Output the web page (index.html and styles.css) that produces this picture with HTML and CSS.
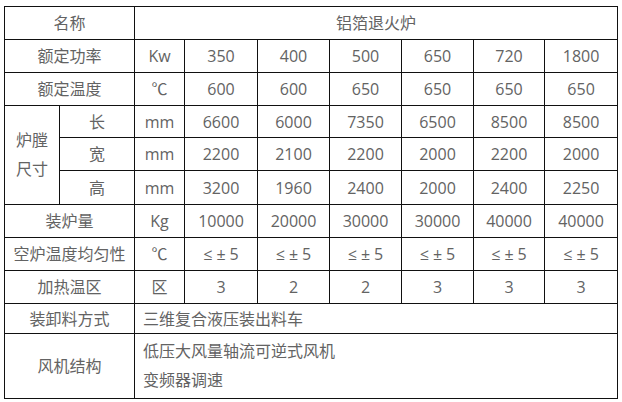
FILE: index.html
```html
<!DOCTYPE html>
<html lang="zh">
<head>
<meta charset="utf-8">
<link rel="stylesheet" href="styles.css">
</head>
<body>
<div class="wrap">
<table class="spec">
  <colgroup>
    <col class="c-a"><col class="c-b"><col class="c-u">
    <col class="c-1"><col class="c-2"><col class="c-3"><col class="c-4"><col class="c-5"><col class="c-6">
  </colgroup>
  <tr class="r33"><td colspan="2">名称</td><td colspan="7">铝箔退火炉</td></tr>
  <tr class="r33"><td colspan="2">额定功率</td><td>Kw</td><td>350</td><td>400</td><td>500</td><td>650</td><td>720</td><td>1800</td></tr>
  <tr class="r33"><td colspan="2">额定温度</td><td>℃</td><td>600</td><td>600</td><td>650</td><td>650</td><td>650</td><td>650</td></tr>
  <tr class="r32"><td rowspan="3" class="two">炉膛<br>尺寸</td><td>长</td><td>mm</td><td>6600</td><td>6000</td><td>7350</td><td>6500</td><td>8500</td><td>8500</td></tr>
  <tr class="r33"><td>宽</td><td>mm</td><td>2200</td><td>2100</td><td>2200</td><td>2000</td><td>2200</td><td>2000</td></tr>
  <tr class="r34"><td>高</td><td>mm</td><td>3200</td><td>1960</td><td>2400</td><td>2000</td><td>2400</td><td>2250</td></tr>
  <tr class="r33"><td colspan="2">装炉量</td><td>Kg</td><td>10000</td><td>20000</td><td>30000</td><td>30000</td><td>40000</td><td>40000</td></tr>
  <tr class="r33"><td colspan="2">空炉温度均匀性</td><td>℃</td><td class="tol">≤±5</td><td class="tol">≤±5</td><td class="tol">≤±5</td><td class="tol">≤±5</td><td class="tol">≤±5</td><td class="tol">≤±5</td></tr>
  <tr class="r33"><td colspan="2">加热温区</td><td>区</td><td>3</td><td>2</td><td>2</td><td>3</td><td>3</td><td>3</td></tr>
  <tr class="r30"><td colspan="2">装卸料方式</td><td colspan="7" class="left">三维复合液压装出料车</td></tr>
  <tr class="r65"><td colspan="2">风机结构</td><td colspan="7" class="left two">低压大风量轴流可逆式风机<br>变频器调速</td></tr>
</table>
</div>
</body>
</html>
```
FILE: styles.css
```css
html, body {
  margin: 0;
  padding: 0;
  background: #ffffff;
}
.wrap {
  padding: 6px 0 0 4px;
}
.spec {
  border-collapse: collapse;
  table-layout: fixed;
  width: 614px;
  font-family: "Open Sans", "Noto Sans CJK SC", sans-serif;
  font-size: 16px;
  color: #636363;
}
.c-a { width: 55px; }
.c-b { width: 75px; }
.c-u { width: 50px; }
.c-1 { width: 73px; }
.c-2 { width: 72px; }
.c-3 { width: 72px; }
.c-4 { width: 72px; }
.c-5 { width: 71px; }
.c-6 { width: 73px; }
.spec td {
  border: 1px solid #111;
  padding: 0;
  text-align: center;
  vertical-align: middle;
  line-height: 20px;
  white-space: nowrap;
  overflow: hidden;
}
.spec td.tol {
  letter-spacing: 4px;
  padding-left: 4px;
}
.spec td.left {
  text-align: left;
  padding-left: 8px;
}
.spec td.two {
  line-height: 29px;
}
.r30 { height: 30px; }
.r32 { height: 32px; }
.r33 { height: 33px; }
.r34 { height: 34px; }
.r65 { height: 65px; }
```
